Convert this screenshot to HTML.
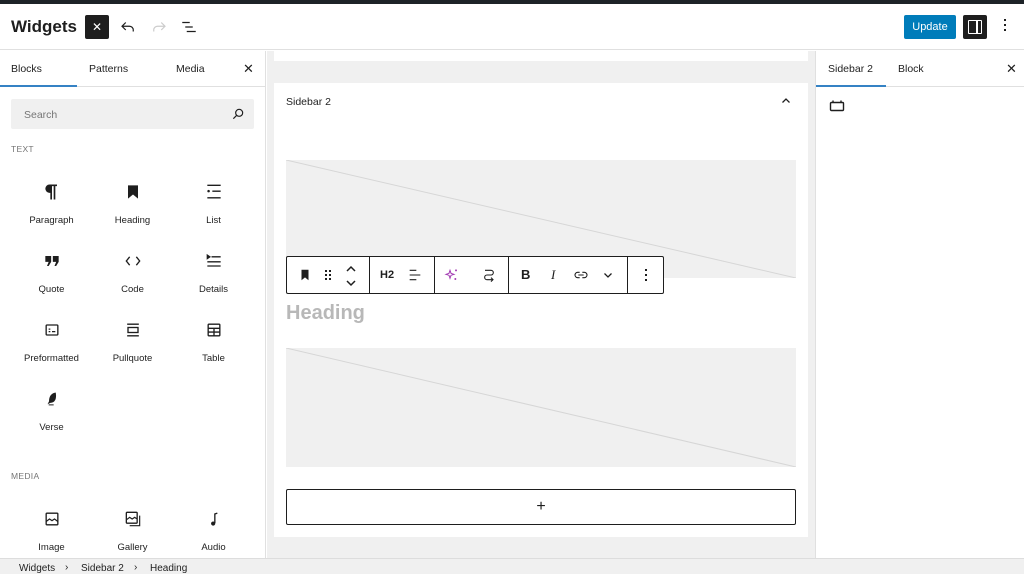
<!DOCTYPE html>
<html><head><meta charset="utf-8"><style>
*{box-sizing:border-box;margin:0;padding:0}
body{width:1024px;height:574px;overflow:hidden;background:#fff;font-family:"Liberation Sans",sans-serif;color:#1e1e1e;position:relative}
.abs{position:absolute}
.topbar{left:0;top:0;width:1024px;height:4px;background:#1d2327}
.header{left:0;top:4px;width:1024px;height:46px;border-bottom:1px solid #e0e0e0;background:#fff}
.title{left:11px;top:13px;font-size:17px;font-weight:bold}
.xbtn{left:85px;top:11px;width:24px;height:24px;background:#1e1e1e;border-radius:2px;color:#fff;font-size:12px;text-align:center;line-height:24px}
.upd{left:904px;top:11px;width:52px;height:24px;background:#007cba;color:#fff;border-radius:2px;font-size:11px;text-align:center;line-height:24px}
.sbt{left:963px;top:11px;width:24px;height:24px;background:#1e1e1e;border-radius:2px}
.left{left:0;top:51px;width:266px;height:507px;border-right:1px solid #e0e0e0;background:#fff}
.tabs{height:36px;border-bottom:1px solid #e0e0e0;position:relative;font-size:10.5px}
.tab{position:absolute;top:12px}
.search{position:absolute;left:11px;top:48px;width:243px;height:30px;background:#f0f0f0;border-radius:2px;font-size:10.5px;color:#757575;padding:10px 13px}
.sec{position:absolute;left:11px;font-size:8.5px;color:#757575;letter-spacing:.3px}
.blk{position:absolute;width:81px;text-align:center;font-size:9.5px}
.blk svg{display:block;margin:0 auto 13px}
.center{left:267px;top:51px;width:548px;height:507px;background:#f0f0f0}
.card{background:#fff;position:absolute}
.ph{position:absolute;left:286px;width:510px;background:#f0f0f0}
.right{left:815px;top:51px;width:209px;height:507px;border-left:1px solid #e0e0e0;background:#fff}
.bottom{left:0;top:558px;width:1024px;height:16px;background:#f0f0f0;border-top:1px solid #ddd;font-size:10px;color:#1e1e1e}
.tb{left:286px;top:256px;width:378px;height:38px;border:1px solid #1e1e1e;border-radius:2px;background:#fff}
.sep{position:absolute;top:0;width:1px;height:36px;background:#1e1e1e}
</style></head><body>
<div class="abs topbar"></div>
<div class="abs header">
 <div class="abs title">Widgets</div>
 <div class="abs xbtn">✕</div>
 <svg class="abs" style="left:119px;top:14px" width="18" height="18" viewBox="0 0 24 24"><path d="M9 6L4 11l5 5M4 11h10a5 5 0 0 1 5 5v2" fill="none" stroke="#1e1e1e" stroke-width="1.6"/></svg>
 <svg class="abs" style="left:150px;top:14px" width="18" height="18" viewBox="0 0 24 24"><path d="M15 6l5 5-5 5M20 11H10a5 5 0 0 0-5 5v2" fill="none" stroke="#ccc" stroke-width="1.6"/></svg>
 <svg class="abs" style="left:180px;top:14px" width="18" height="18" viewBox="0 0 24 24"><path d="M3 6h10M7 12h10M9 18h12" stroke="#1e1e1e" stroke-width="1.6"/></svg>
 <div class="abs upd">Update</div>
 <div class="abs sbt"><div style="position:absolute;left:5px;top:5px;width:14px;height:14px;border:1.5px solid #fff;border-radius:1px"></div><div style="position:absolute;left:13px;top:5px;width:1.5px;height:14px;background:#fff"></div></div>
 <div class="abs" style="left:1004px;top:15px;width:2px;height:2px;background:#1e1e1e;box-shadow:0 5px 0 #1e1e1e,0 10px 0 #1e1e1e"></div>
</div>
<div class="abs left">
 <div class="tabs">
  <div class="tab" style="left:11px">Blocks</div>
  <div class="tab" style="left:89px">Patterns</div>
  <div class="tab" style="left:176px">Media</div>
  <div class="tab" style="left:243px;top:10px;font-size:13px">✕</div>
  <div style="position:absolute;left:0;bottom:-1px;width:77px;height:2px;background:#3582c4"></div>
 </div>
 <div class="search">Search<svg style="position:absolute;right:9px;top:8px" width="14" height="14" viewBox="0 0 24 24"><circle cx="14" cy="10" r="6" fill="none" stroke="#1e1e1e" stroke-width="2"/><path d="M10 14l-6 6" stroke="#1e1e1e" stroke-width="2"/></svg></div>
 <div class="sec" style="top:93px">TEXT</div>
 <div class="blk" style="left:11px;top:131px"><svg width="20" height="20" viewBox="0 0 24 24"><path d="M18 3H9a5 5 0 0 0 0 10h1v8h2V5h2v16h2V5h2z" fill="#1e1e1e"/></svg>Paragraph</div>
 <div class="blk" style="left:92px;top:131px"><svg width="20" height="20" viewBox="0 0 24 24"><path d="M6 4h12v16l-6-5-6 5z" fill="#1e1e1e"/></svg>Heading</div>
 <div class="blk" style="left:173px;top:131px"><svg width="20" height="20" viewBox="0 0 24 24"><path d="M4 4h16M10 11h10M4 19h16" stroke="#1e1e1e" stroke-width="1.6"/><circle cx="5.5" cy="11" r="1.5" fill="#1e1e1e"/></svg>List</div>
 <div class="blk" style="left:11px;top:200px"><svg width="20" height="20" viewBox="0 0 24 24"><path d="M4 6h7v7l-3 5H6l2-5H4zM13 6h7v7l-3 5h-2l2-5h-4z" fill="#1e1e1e"/></svg>Quote</div>
 <div class="blk" style="left:92px;top:200px"><svg width="20" height="20" viewBox="0 0 24 24"><path d="M8 7l-4 5 4 5M16 7l4 5-4 5" fill="none" stroke="#1e1e1e" stroke-width="1.6"/></svg>Code</div>
 <div class="blk" style="left:173px;top:200px"><svg width="20" height="20" viewBox="0 0 24 24"><path d="M4 5l3 2-3 2zM9 7h11M4 13h16M4 18h16" stroke="#1e1e1e" stroke-width="1.6" fill="#1e1e1e"/></svg>Details</div>
 <div class="blk" style="left:11px;top:269px"><svg width="20" height="20" viewBox="0 0 24 24"><rect x="5" y="6" width="14" height="12" rx="1" fill="none" stroke="#1e1e1e" stroke-width="1.6"/><path d="M8 14h2M12 14h4M8 11h2" stroke="#1e1e1e" stroke-width="1.5"/></svg>Preformatted</div>
 <div class="blk" style="left:92px;top:269px"><svg width="20" height="20" viewBox="0 0 24 24"><path d="M5 5h14M5 19h14" stroke="#1e1e1e" stroke-width="1.6"/><rect x="6" y="9" width="12" height="6" fill="none" stroke="#1e1e1e" stroke-width="1.6"/></svg>Pullquote</div>
 <div class="blk" style="left:173px;top:269px"><svg width="20" height="20" viewBox="0 0 24 24"><rect x="5" y="5" width="14" height="14" rx="1" fill="none" stroke="#1e1e1e" stroke-width="1.6"/><path d="M5 10h14M5 14.5h14M12 10v9" stroke="#1e1e1e" stroke-width="1.6"/></svg>Table</div>
 <div class="blk" style="left:11px;top:338px"><svg width="20" height="20" viewBox="0 0 24 24"><path d="M16 5c-5 1-7 5-7 10l-1 2 2-1c5 0 7-4 6-11zM8 19h6" fill="#1e1e1e" stroke="#1e1e1e" stroke-width="1.2"/></svg>Verse</div>
 <div class="sec" style="top:420px">MEDIA</div>
 <div class="blk" style="left:11px;top:458px"><svg width="20" height="20" viewBox="0 0 24 24"><rect x="5" y="5" width="14" height="14" rx="1" fill="none" stroke="#1e1e1e" stroke-width="1.6"/><path d="M5 15l4-3 3 2 3-2 4 3" fill="none" stroke="#1e1e1e" stroke-width="1.4"/></svg>Image</div>
 <div class="blk" style="left:92px;top:458px"><svg width="20" height="20" viewBox="0 0 24 24"><rect x="4" y="4" width="13" height="13" rx="1" fill="none" stroke="#1e1e1e" stroke-width="1.6"/><path d="M20 8v12H8M4 13l4-3 3 2 3-2 3 2" fill="none" stroke="#1e1e1e" stroke-width="1.4"/></svg>Gallery</div>
 <div class="blk" style="left:173px;top:458px"><svg width="20" height="20" viewBox="0 0 24 24"><path d="M13 17V6l3-1" fill="none" stroke="#1e1e1e" stroke-width="1.6"/><circle cx="11" cy="17.5" r="2.5" fill="#1e1e1e"/></svg>Audio</div>
</div>
<div class="abs center">
 <div class="card" style="left:7px;top:0;width:534px;height:10px"></div>
 <div class="card" style="left:7px;top:32px;width:534px;height:454px"></div>
</div>
<div class="abs" style="left:286px;top:96px;font-size:10.5px">Sidebar 2</div>
<svg class="abs" style="left:780px;top:95px" width="12" height="12" viewBox="0 0 24 24"><path d="M5 15l7-7 7 7" fill="none" stroke="#1e1e1e" stroke-width="2.5"/></svg>
<div class="ph" style="top:160px;height:118px"><svg width="510" height="118"><line x1="0" y1="0" x2="510" y2="118" stroke="#d6d6d6" stroke-width="1"/></svg></div>
<div class="ph" style="top:348px;height:119px"><svg width="510" height="119"><line x1="0" y1="0" x2="510" y2="119" stroke="#d6d6d6" stroke-width="1"/></svg></div>
<div class="abs" style="left:286px;top:302px;font-size:20px;font-weight:bold;color:#b8b8b8">Heading</div>
<div class="abs tb">
 <svg class="abs" style="left:11px;top:11px" width="14" height="14" viewBox="0 0 24 24"><path d="M6 3h12v18l-6-5-6 5z" fill="#1e1e1e"/></svg>
 <div class="abs" style="left:38px;top:13px;width:2px;height:2px;background:#1e1e1e;box-shadow:4px 0 #1e1e1e,0 4px #1e1e1e,4px 4px #1e1e1e,0 8px #1e1e1e,4px 8px #1e1e1e"></div>
 <svg class="abs" style="left:57px;top:7px" width="14" height="24" viewBox="0 0 14 24"><path d="M3 7l4-4 4 4M3 17l4 4 4-4" fill="none" stroke="#1e1e1e" stroke-width="1.5"/></svg>
 <div class="sep" style="left:82px"></div>
 <div class="abs" style="left:93px;top:12px;font-size:11px;font-weight:bold">H2</div>
 <svg class="abs" style="left:120px;top:10px" width="16" height="16" viewBox="0 0 24 24"><path d="M4 5h10M4 12h16M4 19h10" stroke="#1e1e1e" stroke-width="1.6"/></svg>
 <div class="sep" style="left:147px"></div>
 <svg class="abs" style="left:157px;top:10px" width="16" height="16" viewBox="0 0 24 24"><path d="M9 5l1.5 4.5L15 11l-4.5 1.5L9 17l-1.5-4.5L3 11l4.5-1.5z" fill="none" stroke="#a33bb3" stroke-width="1.5"/><circle cx="18" cy="5" r="1.5" fill="#a33bb3"/><circle cx="17" cy="18" r="1.5" fill="#a33bb3"/></svg>
 <svg class="abs" style="left:194px;top:10px" width="16" height="16" viewBox="0 0 24 24"><path d="M6 5h9a3.5 3.5 0 0 1 0 7H9a3.5 3.5 0 0 0 0 7h9M15 16l3 3-3 3" fill="none" stroke="#1e1e1e" stroke-width="1.6"/></svg>
 <div class="sep" style="left:221px"></div>
 <div class="abs" style="left:234px;top:10px;font-size:13px;font-weight:bold">B</div>
 <div class="abs" style="left:264px;top:10px;font-size:13px;font-style:italic;font-family:'Liberation Serif',serif">I</div>
 <svg class="abs" style="left:286px;top:10px" width="16" height="16" viewBox="0 0 24 24"><path d="M10 8H7a4 4 0 0 0 0 8h3M14 8h3a4 4 0 0 1 0 8h-3M8 12h8" fill="none" stroke="#1e1e1e" stroke-width="1.6"/></svg>
 <svg class="abs" style="left:315px;top:12px" width="12" height="12" viewBox="0 0 24 24"><path d="M5 9l7 7 7-7" fill="none" stroke="#1e1e1e" stroke-width="2.5"/></svg>
 <div class="sep" style="left:340px"></div>
 <div class="abs" style="left:358px;top:12px;width:2px;height:2px;background:#1e1e1e;box-shadow:0 5px 0 #1e1e1e,0 10px 0 #1e1e1e"></div>
</div>
<div class="abs" style="left:286px;top:489px;width:510px;height:36px;border:1px solid #1e1e1e;border-radius:2px;background:#fff;text-align:center;line-height:33px;font-size:16px">+</div>
<div class="abs right">
 <div class="tabs">
  <div class="tab" style="left:12px">Sidebar 2</div>
  <div class="tab" style="left:82px">Block</div>
  <div class="tab" style="left:190px;top:10px;font-size:13px">✕</div>
  <div style="position:absolute;left:0;bottom:-1px;width:70px;height:2px;background:#3582c4"></div>
 </div>
 <svg class="abs" style="left:13px;top:48px" width="16" height="14" viewBox="0 0 16 14"><rect x="1.5" y="3.5" width="13" height="8" rx="1" fill="none" stroke="#1e1e1e" stroke-width="1.4"/><path d="M4 1.5v2M12 1.5v2" stroke="#1e1e1e" stroke-width="1.4"/></svg>
</div>
<div class="abs bottom"><span style="position:absolute;left:19px;top:4px">Widgets</span><span style="position:absolute;left:65px;top:3px">›</span><span style="position:absolute;left:81px;top:4px">Sidebar 2</span><span style="position:absolute;left:134px;top:3px">›</span><span style="position:absolute;left:150px;top:4px">Heading</span></div>
</body></html>
